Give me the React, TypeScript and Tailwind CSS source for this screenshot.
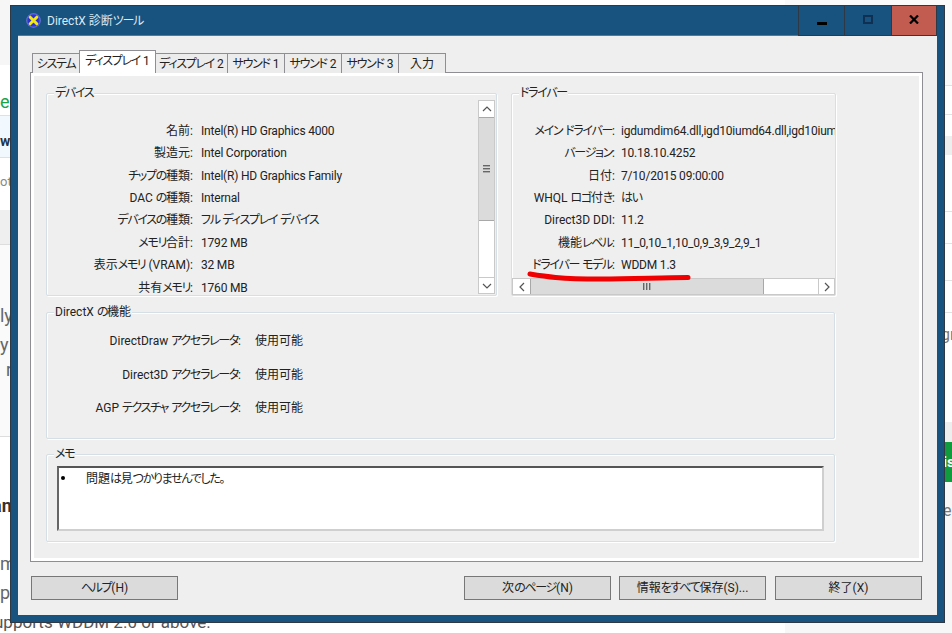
import React from 'react';

const FONT = "font-['Roboto','Noto_Sans_CJK_JP',sans-serif] [font-feature-settings:'palt']";

const DEVICE_ROWS = [
  ['名前:', 'Intel(R) HD Graphics 4000'],
  ['製造元:', 'Intel Corporation'],
  ['チップの種類:', 'Intel(R) HD Graphics Family'],
  ['DAC の種類:', 'Internal'],
  ['デバイスの種類:', 'フル ディスプレイ デバイス'],
  ['メモリ合計:', '1792 MB'],
  ['表示メモリ (VRAM):', '32 MB'],
  ['共有メモリ:', '1760 MB'],
];

const DRIVER_ROWS = [
  ['メイン ドライバー:', 'igdumdim64.dll,igd10iumd64.dll,igd10iumd64.dll'],
  ['バージョン:', '10.18.10.4252'],
  ['日付:', '7/10/2015 09:00:00'],
  ['WHQL ロゴ付き:', 'はい'],
  ['Direct3D DDI:', '11.2'],
  ['機能レベル:', '11_0,10_1,10_0,9_3,9_2,9_1'],
  ['ドライバー モデル:', 'WDDM 1.3'],
];

const FEATURE_ROWS = ['DirectDraw アクセラレータ:', 'Direct3D アクセラレータ:', 'AGP テクスチャ アクセラレータ:'];

const TABS = [
  { label: 'システム', width: 'w-[48px]' },
  { label: 'ディスプレイ 1', width: 'w-[77px]', active: true },
  { label: 'ディスプレイ 2', width: 'w-[73px]' },
  { label: 'サウンド 1', width: 'w-[58px]' },
  { label: 'サウンド 2', width: 'w-[58px]' },
  { label: 'サウンド 3', width: 'w-[58px]' },
  { label: '入力', width: 'w-[48px]' },
];

// the reference's UI font has much narrower kana than Noto, so tighten those runs only
function Jp({ text }: { text: string }) {
  return (
    <>
      {text.split(/([\u3040-\u30ff]+)/).map((part, i) =>
        i % 2 === 1 ? <span key={i} className="tracking-[-1.3px]">{part}</span> : part
      )}
    </>
  );
}

function Group({ title, className, children }: { title: string; className: string; children?: React.ReactNode }) {
  return (
    <div className={`relative rounded-[2px] border border-[#d5dfe6] shadow-[1px_1px_0_#ffffff,inset_1px_1px_0_#ffffff] ${className}`}>
      <span className="absolute left-[7px] top-[-9px] bg-[#efefef] px-px text-[12px] leading-[16px] text-[#222]"><Jp text={title} /></span>
      {children}
    </div>
  );
}

function Chevron({ d }: { d: string }) {
  return (
    <svg width="10" height="10" viewBox="0 0 10 10" fill="none" stroke="#555" strokeWidth="1.2">
      <path d={d} />
    </svg>
  );
}

function Grip({ vertical }: { vertical?: boolean }) {
  return (
    <svg width="8" height="8" viewBox="0 0 8 8" fill="#666">
      {vertical
        ? [0, 3, 6].map(p => <rect key={p} x="0" y={p} width="7" height="1.4" />)
        : [0, 3, 6].map(p => <rect key={p} x={p} y="0" width="1.4" height="7" />)}
    </svg>
  );
}

function LogoIcon() {
  return (
    <svg width="15" height="15" viewBox="0 0 15 15">
      <defs>
        <radialGradient id="dxball" cx="0.5" cy="0.5" r="0.55">
          <stop offset="0" stopColor="#2028b8" />
          <stop offset="0.7" stopColor="#2f37cc" />
          <stop offset="1" stopColor="#9aa2e8" />
        </radialGradient>
      </defs>
      <circle cx="7.5" cy="7.5" r="7.2" fill="url(#dxball)" />
      <path d="M4.2 4.2 L10.8 10.8 M10.8 4.2 L4.2 10.8" stroke="#f2e61e" strokeWidth="3" strokeLinecap="round" />
    </svg>
  );
}

function TitleBar() {
  return (
    <div className="flex h-[30px] shrink-0 items-stretch">
      <div className="flex flex-1 items-center gap-[6px] border-b border-[#4b7ba3] pl-[8px]">
        <LogoIcon />
        <span className="text-[12px] text-[#dfe9f1]"><Jp text="DirectX 診断ツール" /></span>
      </div>
      <div className="flex w-[47px] items-center justify-center border-x border-b border-[#2d3a45] pt-[6px]">
        <div className="h-[3px] w-[10px] bg-black" />
      </div>
      <div className="flex w-[46px] items-center justify-center border-b border-[#2d3a45] pb-[2px]">
        <div className="h-[9px] w-[10px] border-2 border-[#0f3050]" />
      </div>
      <div className="flex w-[46px] items-center justify-center border-x border-b border-[#2d3a45] bg-[#c25b50] pb-[2px]">
        <svg width="10" height="9" viewBox="0 0 10 9">
          <path d="M1 0.5 L9 8.5 M9 0.5 L1 8.5" stroke="#000" strokeWidth="2.2" />
        </svg>
      </div>
    </div>
  );
}

function Tabs() {
  return (
    <div className="relative z-10 ml-[14px] flex h-[23px] items-end">
      {TABS.map(tab => (
        <div
          key={tab.label}
          className={
            tab.active
              ? `-ml-px flex h-[23px] ${tab.width} items-center justify-center whitespace-nowrap border border-b-0 border-[#8e8e93] bg-white pb-[2px] text-[12px] text-[#222]`
              : `-ml-px flex h-[20px] ${tab.width} items-center justify-center whitespace-nowrap border border-b-0 border-[#8e8e93] bg-[#ececec] text-[12px] text-[#222] first:ml-0`
          }
        >
          <span><Jp text={tab.label} /></span>
        </div>
      ))}
    </div>
  );
}

function InfoRows({ rows, labelWidth, gap }: { rows: string[][]; labelWidth: string; gap: string }) {
  return (
    <div className="flex flex-col">
      {rows.map(([label, value]) => (
        <div key={label} className="flex h-[22.4px] items-center whitespace-nowrap text-[12px] text-[#222]">
          <span className={`${labelWidth} shrink-0 text-right`}><Jp text={label} /></span>
          <span className={`${gap} tracking-[-0.2px]`}><Jp text={value} /></span>
        </div>
      ))}
    </div>
  );
}

function DevicePanel() {
  return (
    <Group title="デバイス" className="h-[203px] w-[451px]">
      <div className="flex h-full">
        <div className="h-[201px] flex-1 overflow-hidden pt-[25.6px]">
          <InfoRows rows={DEVICE_ROWS} labelWidth="w-[146px]" gap="ml-[8px]" />
        </div>
        <div className="mb-px mr-px mt-[6px] flex w-[17px] flex-col border border-[#c9c9c9] bg-white">
          <div className="flex h-[16px] items-center justify-center"><Chevron d="M1 7 L5 3 L9 7" /></div>
          <div className="flex h-[104px] items-center justify-center border-y border-[#a8a8a8] bg-[#dbdbdb]"><Grip vertical /></div>
          <div className="flex-1" />
          <div className="flex h-[16px] items-center justify-center border-t border-[#c9c9c9]"><Chevron d="M1 3 L5 7 L9 3" /></div>
        </div>
      </div>
    </Group>
  );
}

function DriverPanel() {
  return (
    <Group title="ドライバー" className="flex h-[203px] w-[325px] flex-col">
      <div className="flex-1 overflow-hidden pt-[25.6px]">
        <InfoRows rows={DRIVER_ROWS} labelWidth="w-[103px]" gap="ml-[6px]" />
      </div>
      <div className="flex h-[17px] shrink-0 border border-[#c9c9c9] bg-white">
        <div className="flex w-[17px] items-center justify-center"><Chevron d="M7 1 L3 5 L7 9" /></div>
        <div className="flex w-[234px] items-center justify-center border-x border-[#a8a8a8] bg-[#dbdbdb]"><Grip /></div>
        <div className="flex-1" />
        <div className="flex w-[16px] items-center justify-center border-l border-[#c9c9c9]"><Chevron d="M3 1 L7 5 L3 9" /></div>
      </div>
    </Group>
  );
}

function FeaturePanel() {
  return (
    <Group title="DirectX の機能" className="mt-[16px] h-[127px] w-[789px]">
      <div className="flex flex-col gap-[11.5px] pt-[17px]">
        {FEATURE_ROWS.map(label => (
          <div key={label} className="flex h-[22px] items-center text-[12px] text-[#222]">
            <span className="w-[194px] whitespace-nowrap text-right"><Jp text={label} /></span>
            <span className="ml-[14px]">使用可能</span>
          </div>
        ))}
      </div>
    </Group>
  );
}

function MemoPanel() {
  return (
    <Group title="メモ" className="mt-[15px] h-[88px] w-[789px] px-[10px] pt-[11px]">
      <div className="flex h-[65px] w-[767px] border-b-2 border-l-2 border-r-2 border-t-2 border-b-[#cfcfcf] border-l-[#666] border-r-[#cfcfcf] border-t-[#555] bg-white pl-[2px] pt-[3px] text-[12px] text-[#222]">
        <div className="mr-[21px] mt-[5px] h-[4px] w-[4px] rounded-full bg-black" />
        <span className="leading-[16px]"><Jp text="問題は見つかりませんでした。" /></span>
      </div>
    </Group>
  );
}

function DialogButton({ label, className = '' }: { label: string; className?: string }) {
  return (
    <div className={`flex h-[24px] w-[147px] items-center justify-center border border-[#777] bg-[#dbdbdb] text-[12px] text-[#222] ${className}`}>
      <span><Jp text={label} /></span>
    </div>
  );
}

function DxDiagWindow() {
  return (
    <div className="absolute left-[10px] top-[5px] flex h-[618px] w-[935px] flex-col border border-[#2d3a45] bg-[#18527f] pl-[7px] pr-[7px] pb-[7px]">
      <TitleBar />
      <div className="flex flex-1 flex-col bg-[#efefef] pt-[14px]">
        <Tabs />
        <div className="-mt-px ml-[12px] h-[490px] w-[893px] border border-[#8e8e93]">
          <div className="h-full border-[3px] border-white pl-[12px] pt-[17px]">
            <div className="flex gap-[14px]">
              <DevicePanel />
              <DriverPanel />
            </div>
            <FeaturePanel />
            <MemoPanel />
          </div>
        </div>
        <div className="ml-[13px] mt-[14px] flex">
          <DialogButton label="ヘルプ(H)" />
          <DialogButton label="次のページ(N)" className="ml-[286px] border-[#3a80b8]" />
          <DialogButton label="情報をすべて保存(S)..." className="ml-[8px]" />
          <DialogButton label="終了(X)" className="ml-[9px]" />
        </div>
      </div>
    </div>
  );
}

function PageLeft() {
  return (
    <div className="relative flex w-[10px] shrink-0 flex-col text-[18px] text-[#666]">
      <div className="h-[65px] shrink-0 bg-[#f6f6f6]" />
      <div className="flex h-[50px] shrink-0 items-end text-[#1aa34a]">e</div>
      <div className="h-[43px] shrink-0 border-y border-[#cfe6f2] bg-[#f2f9fe] pt-[17px] text-[14px] font-bold leading-[16px] text-[#234]">w</div>
      <div className="h-[52px] shrink-0 pt-[15px] text-[13px] leading-[18px] text-[#888]">ota</div>
      <div className="h-[35px] shrink-0 border-b border-[#ddd] bg-[#efefef]" />
      <div className="h-[191px] shrink-0 bg-[#fafafa] pt-[56px] leading-[29px]">
        <div className="-ml-[6px] whitespace-nowrap">tly</div>
        <div className="whitespace-nowrap">y</div>
        <div className="-mt-[4px] whitespace-nowrap pl-[6px]">r</div>
      </div>
      <div className="h-[174px] shrink-0 border-t border-[#ddd] bg-white pt-[54px] leading-[29px]">
        <div className="-ml-[8px] whitespace-nowrap font-bold text-[#333]">an</div>
        <div className="mt-[29px] whitespace-nowrap">m</div>
        <div className="whitespace-nowrap">p</div>
      </div>
      <div className="-ml-[6px] whitespace-nowrap text-[17px] leading-[24px] text-[#555]">upports WDDM 2.0 or above.</div>
    </div>
  );
}

function PageRight() {
  return (
    <div className="flex h-[633px] w-[167px] shrink-0 flex-col items-end bg-[#f7f7f7] text-[16px] text-[#777]">
      <div className="h-[86px] w-full shrink-0 border-b border-[#e2e2e2] bg-[#fafafa]" />
      <div className="h-[29px] w-full shrink-0 border-b border-[#e2e2e2] bg-white" />
      <div className="h-[21px] w-full shrink-0 bg-white" />
      <div className="h-[19px] w-full shrink-0 bg-[#eeeeee]" />
      <div className="h-[57px] w-full shrink-0 border-b border-[#e2e2e2] bg-white" />
      <div className="h-[32px] w-full shrink-0 border-b border-[#e2e2e2] bg-white" />
      <div className="h-[37px] w-full shrink-0 border-b border-[#e2e2e2] bg-white" />
      <div className="h-[32px] w-full shrink-0 border-b border-[#e2e2e2] bg-white" />
      <div className="h-[73px] w-full shrink-0 overflow-hidden bg-white pl-[156px] pt-[12px] leading-[20px]">gr</div>
      <div className="h-[36px] w-full shrink-0 bg-white" />
      <div className="h-[20px] w-full shrink-0 bg-[#eeeeee]" />
      <div className="flex h-[40px] w-full shrink-0 items-center overflow-hidden bg-[#0f9b3e] pl-[158px] text-[15px] font-bold text-white">is</div>
      <div className="h-[140px] w-full shrink-0 overflow-hidden pl-[158px] pt-[18px] leading-[22px]">er</div>
    </div>
  );
}

export default function App() {
  return (
    <div className={`relative flex h-[633px] w-[952px] justify-between overflow-hidden bg-white ${FONT}`}>
      <PageLeft />
      <PageRight />
      <DxDiagWindow />
      <svg className="absolute left-[520px] top-[265px] blur-[0.5px]" width="180" height="22" viewBox="520 265 180 22" fill="none">
        <path d="M530 274 C 545 276.5, 560 279, 600 279 C 635 279, 660 277.5, 688 277.5" stroke="#f00000" strokeWidth="5" strokeLinecap="round" />
      </svg>
    </div>
  );
}
